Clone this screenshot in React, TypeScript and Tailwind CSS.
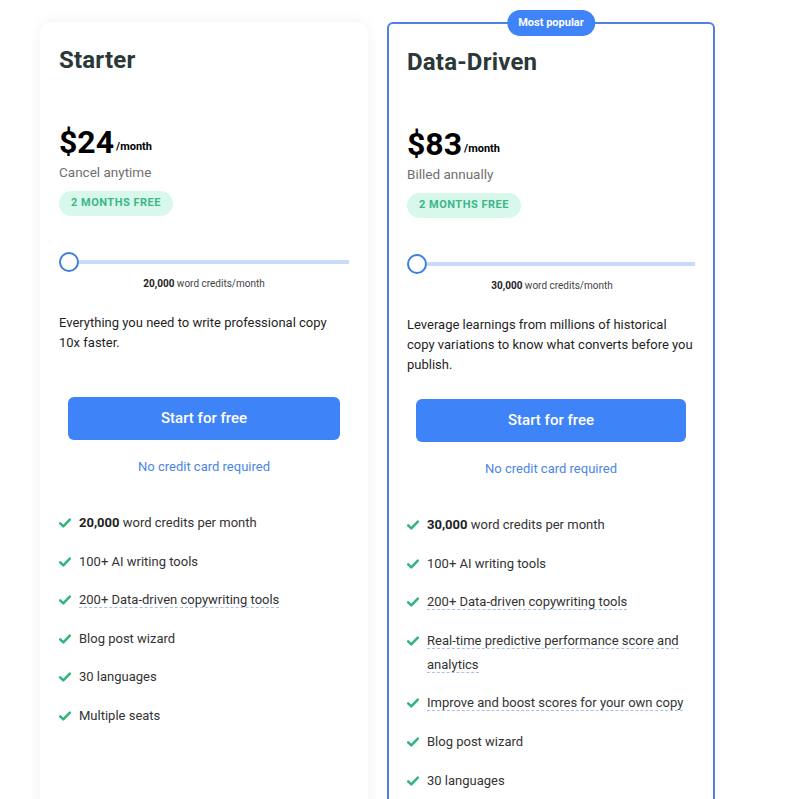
import React from 'react';

interface Feature {
  text: string;
  bold?: string;
  dotted?: boolean;
}

interface Plan {
  name: string;
  price: string;
  note: string;
  credits: string;
  description: string;
  features: Feature[];
  popular?: boolean;
}

const plans: Plan[] = [
  {
    name: 'Starter',
    price: '$24',
    note: 'Cancel anytime',
    credits: '20,000',
    description: 'Everything you need to write professional copy 10x faster.',
    features: [
      { bold: '20,000', text: ' word credits per month' },
      { text: '100+ AI writing tools' },
      { text: '200+ Data-driven copywriting tools', dotted: true },
      { text: 'Blog post wizard' },
      { text: '30 languages' },
      { text: 'Multiple seats' },
    ],
  },
  {
    name: 'Data-Driven',
    price: '$83',
    note: 'Billed annually',
    credits: '30,000',
    description:
      'Leverage learnings from millions of historical copy variations to know what converts before you publish.',
    popular: true,
    features: [
      { bold: '30,000', text: ' word credits per month' },
      { text: '100+ AI writing tools' },
      { text: '200+ Data-driven copywriting tools', dotted: true },
      { text: 'Real-time predictive performance score and analytics', dotted: true },
      { text: 'Improve and boost scores for your own copy', dotted: true },
      { text: 'Blog post wizard' },
      { text: '30 languages' },
      { text: 'Multiple seats' },
    ],
  },
];

const Check = () => (
  <svg viewBox="0 0 12 12" className="w-[12px] h-[12px] mt-[6px] shrink-0" fill="none">
    <path d="M1.2 6.4l3.1 3L10.8 2.6" stroke="#2fb57d" strokeWidth="2.5" strokeLinecap="round" strokeLinejoin="round" />
  </svg>
);

const PlanCard: React.FC<{ plan: Plan }> = ({ plan }) => {
  return (
    <div
      className={`relative w-[328px] shrink-0 bg-white mt-[22px] ${
        plan.popular
          ? 'border-2 border-[#4d82e3] rounded-[6px]'
          : 'rounded-[12px] shadow-[0_0_14px_rgba(0,0,0,0.06)]'
      }`}
    >
      {plan.popular && (
        <div className="absolute left-1/2 -translate-x-1/2 -top-[14px] h-[26px] px-[11px] rounded-full bg-[#3e83f8] text-white text-[11px] font-bold flex items-center">
          Most popular
        </div>
      )}
      <div className={plan.popular ? 'pl-[18px] pr-[16px] pt-[22px]' : 'px-[19px] pt-[22px]'}>
        <h2 className="text-[24px] leading-[32px] font-bold text-[#2b3838] tracking-[0.2px]">{plan.name}</h2>

        <div className="mt-[44px] flex items-end">
          <span className="text-[32px] leading-[44px] font-bold text-black">{plan.price}</span>
          <span className="text-[11px] font-bold text-black ml-[2px] mb-[9px]">/month</span>
        </div>
        <div className="text-[13.5px] leading-[20px] text-[#707070] -mt-[2px]">{plan.note}</div>
        <div className="mt-[9px] inline-flex items-center h-[25px] px-[12px] rounded-full bg-[#d8f8ec] text-[#3db68a] text-[11px] font-bold tracking-[0.5px]">
          2 MONTHS FREE
        </div>

        <div className={`mt-[36px] flex items-center ${plan.popular ? 'mr-[2px]' : ''}`}>
          <div className="w-[20px] h-[20px] rounded-full border-2 border-[#3d7ee0] bg-white shrink-0" />
          <div className="flex-1 h-[4px] bg-[#c9dbfa]" />
        </div>
        <div className="mt-[4px] text-center text-[10px] leading-[16px] text-[#444]">
          <span className="font-bold text-[#222]">{plan.credits}</span> word credits/month
        </div>

        <p className="mt-[21px] text-[13px] leading-[20px] text-[#1f1f1f] h-[60px]">{plan.description}</p>

        <div className={`mt-[24px] ${plan.popular ? 'pl-[9px] pr-[11px]' : 'px-[9px]'}`}>
          <button className="w-full h-[43px] rounded-[6px] bg-[#3e83f8] text-white text-[15px] font-medium">
            Start for free
          </button>
        </div>
        <div className={`mt-[17px] text-center text-[13px] leading-[20px] text-[#4c86e2] ${plan.popular ? 'mr-[2px]' : ''}`}>
          No credit card required
        </div>

        <ul className="mt-[34px] flex flex-col gap-[14.6px] pb-[40px]">
          {plan.features.map((f, i) => (
            <li key={i} className="flex gap-[8px] text-[13px] leading-[24px] text-[#333]">
              <Check />
              <span>
                <span className={f.dotted ? 'border-b border-dashed border-[#a9c0ea] [box-decoration-break:clone]' : ''}>
                  {f.bold && <span className="font-bold text-[#222]">{f.bold}</span>}
                  {f.text}
                </span>
              </span>
            </li>
          ))}
        </ul>
      </div>
    </div>
  );
};

const App: React.FC = () => {
  return (
    <div className="min-h-screen h-[799px] overflow-hidden bg-white font-['Roboto',sans-serif]">
      <div className="flex gap-[19px] pl-[40px]">
        {plans.map((p) => (
          <PlanCard key={p.name} plan={p} />
        ))}
      </div>
    </div>
  );
};

export default App;
